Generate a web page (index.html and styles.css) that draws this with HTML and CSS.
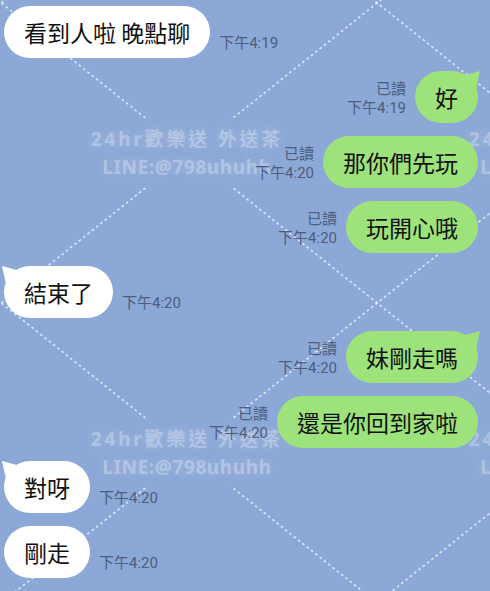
FILE: index.html
```html
<!DOCTYPE html>
<html lang="zh-Hant">
<head>
    <meta charset="UTF-8">
    <meta name="viewport" content="width=device-width, initial-scale=1.0">
    <title>聊天</title>
    <link rel="stylesheet" href="styles.css">
</head>
<body>
    <div class="chat">
        <!-- background pattern of the chat room -->
        <svg class="pattern" width="490" height="591" viewBox="0 0 490 591">
            <defs>
                <mask id="holes">
                    <rect x="0" y="0" width="490" height="591" fill="white"/>
                    <circle cx="189" cy="153" r="54" fill="black"/>
                    <circle cx="565" cy="153" r="54" fill="black"/>
                    <circle cx="189" cy="453" r="54" fill="black"/>
                    <circle cx="565" cy="453" r="54" fill="black"/>
                </mask>
            </defs>
            <g class="lines" mask="url(#holes)">
                <line x1="-20" y1="-14" x2="510" y2="409"/>
                <line x1="-20" y1="-314" x2="510" y2="109"/>
                <line x1="-20" y1="286" x2="510" y2="709"/>
                <line x1="-20" y1="20" x2="510" y2="-403"/>
                <line x1="-20" y1="320" x2="510" y2="-103"/>
                <line x1="-20" y1="620" x2="510" y2="197"/>
                <line x1="-20" y1="920" x2="510" y2="497"/>
            </g>
        </svg>

        <div class="watermark" style="left: 187px; top: 153px;">
            <span>24hr歡樂送 外送茶</span>
            <span>LINE:@798uhuhh</span>
        </div>
        <div class="watermark" style="left: 565px; top: 153px;">
            <span>24hr歡樂送 外送茶</span>
            <span>LINE:@798uhuhh</span>
        </div>
        <div class="watermark" style="left: 187px; top: 453px;">
            <span>24hr歡樂送 外送茶</span>
            <span>LINE:@798uhuhh</span>
        </div>
        <div class="watermark" style="left: 565px; top: 453px;">
            <span>24hr歡樂送 外送茶</span>
            <span>LINE:@798uhuhh</span>
        </div>

        <div class="msg in">
            <div class="bubble">看到人啦 晚點聊</div>
            <div class="meta">下午4:19</div>
        </div>
        <div class="msg out">
            <div class="meta">已讀<br>下午4:19</div>
            <div class="bubble tail">好</div>
        </div>
        <div class="msg out">
            <div class="meta">已讀<br>下午4:20</div>
            <div class="bubble">那你們先玩</div>
        </div>
        <div class="msg out">
            <div class="meta">已讀<br>下午4:20</div>
            <div class="bubble">玩開心哦</div>
        </div>
        <div class="msg in">
            <div class="bubble tail">結束了</div>
            <div class="meta">下午4:20</div>
        </div>
        <div class="msg out">
            <div class="meta">已讀<br>下午4:20</div>
            <div class="bubble tail">妹剛走嗎</div>
        </div>
        <div class="msg out">
            <div class="meta">已讀<br>下午4:20</div>
            <div class="bubble">還是你回到家啦</div>
        </div>
        <div class="msg in">
            <div class="bubble tail">對呀</div>
            <div class="meta">下午4:20</div>
        </div>
        <div class="msg in">
            <div class="bubble">剛走</div>
            <div class="meta">下午4:20</div>
        </div>
    </div>
</body>
</html>
```

FILE: styles.css
```css
body {
    margin: 0;
    background-color: #8ca8d6;
    font-family: 'Noto Sans CJK TC', 'Noto Sans', sans-serif;
}

.chat {
    position: relative;
    width: 490px;
    height: 591px;
    overflow: hidden;
    box-sizing: border-box;
    padding: 6px 12px 0 4px;
    display: flex;
    flex-direction: column;
    gap: 13px;
}

/* dashed diamonds behind the messages */
.pattern {
    position: absolute;
    top: 0;
    left: 0;
}

.lines line {
    stroke: rgba(255, 255, 255, 0.75);
    stroke-width: 1.6;
    stroke-dasharray: 2.5 3;
}

.watermark {
    position: absolute;
    transform: translate(-50%, -50%);
    display: flex;
    flex-direction: column;
    align-items: center;
    gap: 4px;
    color: rgba(255, 255, 255, 0.3);
    font-family: 'Noto Sans', 'Noto Sans CJK TC', sans-serif;
    font-weight: bold;
    font-size: 19px;
    line-height: 24px;
    white-space: nowrap;
    text-shadow: 0 0 10px rgba(255, 255, 255, 0.2);
}

.watermark span:first-child {
    letter-spacing: 2.8px;
}

.watermark span:last-child {
    letter-spacing: 0.6px;
}

.msg {
    position: relative;
    display: flex;
    align-items: flex-end;
    gap: 9px;
}

.msg.out {
    justify-content: flex-end;
}

.bubble {
    position: relative;
    height: 52px;
    box-sizing: border-box;
    padding: 0 20px;
    border-radius: 26px;
    font-size: 23px;
    line-height: 52px;
    color: #111;
    white-space: nowrap;
}

.in .bubble {
    background-color: #ffffff;
}

.out .bubble {
    background-color: #9ee27b;
}

/* small pointer on the first bubble of a group */
.bubble.tail::before {
    content: '';
    position: absolute;
    top: 0;
    width: 22px;
    height: 20px;
    background-color: inherit;
}

.out .bubble.tail::before {
    right: -2px;
    clip-path: polygon(0 30%, 100% 0, 80% 100%);
}

.in .bubble.tail::before {
    left: -2px;
    clip-path: polygon(100% 30%, 0 0, 20% 100%);
}

.meta {
    padding-bottom: 5px;
    font-family: Roboto, 'Noto Sans CJK TC', sans-serif;
    font-size: 15px;
    line-height: 19px;
    color: #4d5d7e;
    white-space: nowrap;
}

.out .meta {
    text-align: right;
}
```
